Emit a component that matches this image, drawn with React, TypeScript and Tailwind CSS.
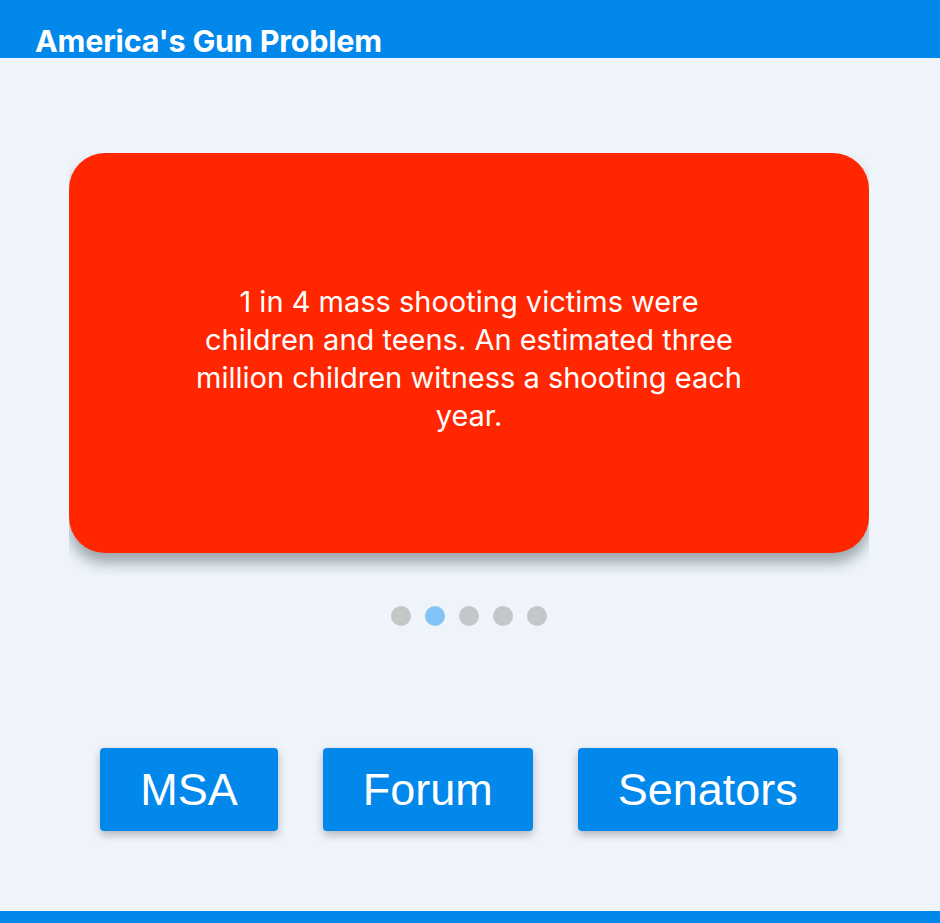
import React from 'react';

const facts = [
  '1 in 4 mass shooting victims were children and teens. An estimated three million children witness a shooting each year.',
];

const App: React.FC = () => {
  const active = 1;

  return (
    <div className="min-h-[923px] bg-[#eef4fa] flex flex-col font-['Inter',sans-serif]">
      {/* Header */}
      <header className="h-[58px] bg-[#0288ea] flex items-end px-[35px]">
        <h1 className="text-[30.5px] leading-[40px] font-bold text-white tracking-[-0.2px] translate-y-[3px]">America's Gun Problem</h1>
      </header>

      {/* Carousel */}
      <div className="flex flex-col items-center pt-[95px] pr-[2px]">
        <div className="w-[800px] h-[422px] overflow-hidden">
          <div className="w-[800px] h-[400px] rounded-[36px] bg-[#ff2600] shadow-[0_10px_14px_rgba(60,70,80,0.45)] flex items-center justify-center pt-3">
            <p className="w-[560px] text-center text-white text-[29px] leading-[38px] font-normal">{facts[0]}</p>
          </div>
        </div>

        <div className="flex gap-[14px] mt-[31px]">
          {[0, 1, 2, 3, 4].map((i) => (
            <span
              key={i}
              className={i === active ? 'w-5 h-5 rounded-full bg-[#82c4f5]' : 'w-5 h-5 rounded-full bg-[#c4c6c8]'}
            />
          ))}
        </div>
      </div>

      {/* Links */}
      <div className="flex justify-center gap-[45px] mt-[122px] pr-[2px] font-['Liberation_Sans',Arial,sans-serif]">
        <button className="h-[83px] px-10 bg-[#0288ea] text-white text-[45px] rounded-[4px] shadow-[0_4px_8px_rgba(0,0,0,0.25)]">MSA</button>
        <button className="h-[83px] px-10 bg-[#0288ea] text-white text-[45px] rounded-[4px] shadow-[0_4px_8px_rgba(0,0,0,0.25)]">Forum</button>
        <button className="h-[83px] px-10 bg-[#0288ea] text-white text-[45px] rounded-[4px] shadow-[0_4px_8px_rgba(0,0,0,0.25)]">Senators</button>
      </div>

      <div className="flex-1" />
      <footer className="h-[12px] bg-[#0288ea]" />
    </div>
  );
};

export default App;
